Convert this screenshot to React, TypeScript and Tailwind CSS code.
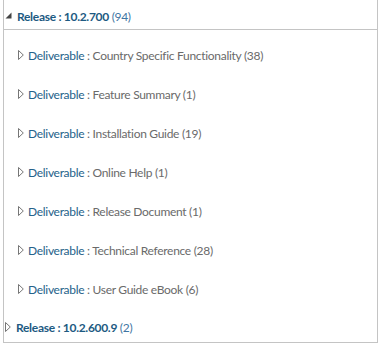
import React from "react";

const deliverables = [
  ["Country Specific Functionality", 38],
  ["Feature Summary", 1],
  ["Installation Guide", 19],
  ["Online Help", 1],
  ["Release Document", 1],
  ["Technical Reference", 28],
  ["User Guide eBook", 6],
] as const;

function Expanded() {
  return (
    <svg width="7" height="7" viewBox="0 0 7 7" className="shrink-0">
      <path d="M6.5 0.5 L6.5 6.5 L0.5 6.5 Z" fill="#444" />
    </svg>
  );
}

function Collapsed() {
  return (
    <svg width="6" height="10" viewBox="0 0 6 10" className="shrink-0">
      <path d="M0.5 0.5 L5.3 5 L0.5 9.5 Z" fill="none" stroke="#666" strokeWidth="0.9" />
    </svg>
  );
}

export default function App() {
  return (
    <div
      className="w-[384px] h-[345px] bg-white overflow-hidden text-[12px] tracking-[-0.3px]"
      style={{ fontFamily: "Lato, 'Noto Sans', sans-serif" }}
    >
      <div className="ml-[3px] w-[375px] border-x border-[#c4c4c4]">
        <div className="h-[30px] flex items-center pl-[1px] pt-[4px] border-b border-[#c4c4c4]">
          <span className="mb-[3px] mr-[5px]">
            <Expanded />
          </span>
          <span className="whitespace-pre">
            <span className="font-bold text-[#1d5a82]">Release : 10.2.700</span>
            <span className="text-[#3f76a3]"> (94)</span>
          </span>
        </div>
        <div className="pt-[6px]">
          {deliverables.map(([name, n]) => (
            <div key={name} className="h-[39px] flex items-center pl-[14px]">
              <span className="mb-[2px] mr-[4px]">
                <Collapsed />
              </span>
              <span className="whitespace-pre">
                <span className="text-[#25628a]">Deliverable</span>
                <span className="text-[#6a6a6a]">
                  {" : "}
                  {name} ({n})
                </span>
              </span>
            </div>
          ))}
        </div>
        <div className="h-[34px] flex items-center pl-[1px] pt-[4px] border-b border-[#c4c4c4]">
          <span className="mb-[2px] mr-[5px]">
            <Collapsed />
          </span>
          <span className="whitespace-pre">
            <span className="font-bold text-[#1d5a82]">Release : 10.2.600.9</span>
            <span className="text-[#3f76a3]"> (2)</span>
          </span>
        </div>
      </div>
    </div>
  );
}
